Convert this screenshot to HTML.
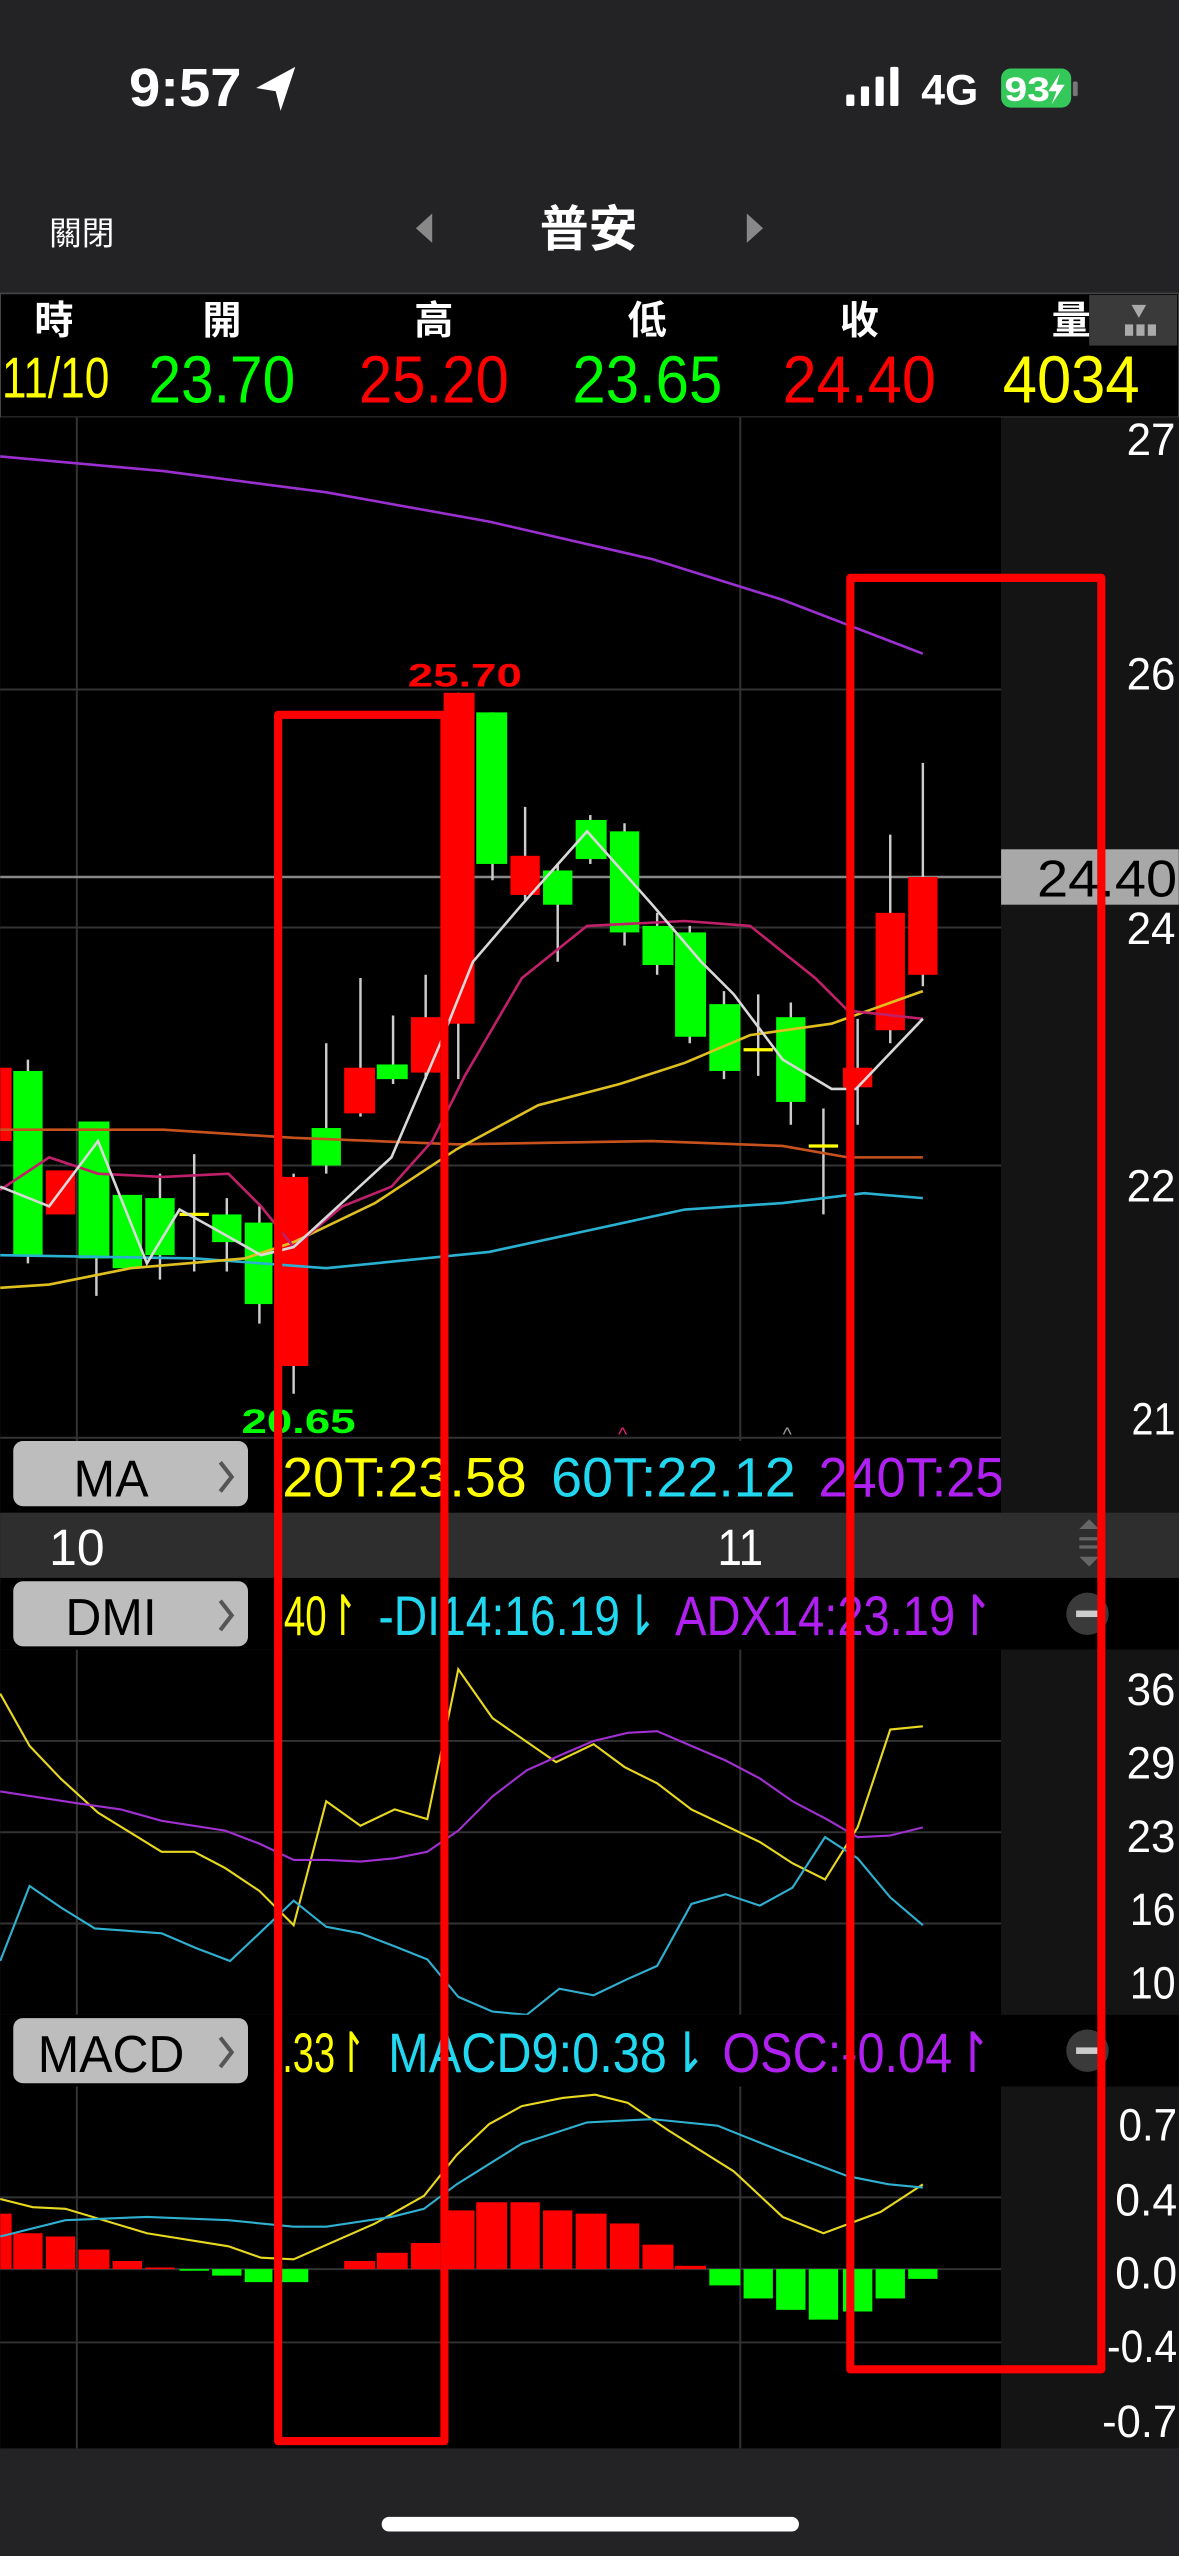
<!DOCTYPE html>
<html><head><meta charset="utf-8"><style>
html,body{margin:0;padding:0;background:#232326;}
svg{display:block;}
text{font-family:"Liberation Sans","Noto Sans CJK TC",sans-serif;}
</style></head><body>
<svg width="1179" height="2556" viewBox="0 0 723 1568" xmlns="http://www.w3.org/2000/svg">
<rect x="0" y="0" width="723" height="1568" fill="#232326"/>
<!-- status bar -->
<text x="79" y="65" font-size="33" font-weight="bold" fill="#fff" textLength="69" lengthAdjust="spacingAndGlyphs">9:57</text>
<path d="M157 54 L181 41 L172 68 L169 56 Z" fill="#fff"/>
<rect x="519" y="58" width="5" height="7" rx="1" fill="#fff"/>
<rect x="528" y="53" width="5" height="12" rx="1" fill="#fff"/>
<rect x="537" y="47" width="5" height="18" rx="1" fill="#fff"/>
<rect x="546" y="41" width="5" height="24" rx="1" fill="#fff"/>
<text x="565" y="64" font-size="26" font-weight="bold" fill="#fff" textLength="35" lengthAdjust="spacingAndGlyphs">4G</text>
<rect x="614" y="42" width="43" height="24" rx="6" fill="#34c759"/>
<text x="616" y="62" font-size="21" font-weight="bold" fill="#fff" textLength="28" lengthAdjust="spacingAndGlyphs">93</text>
<path d="M650 45 L643 56 L648 56 L645 64 L653 52 L648 52 Z" fill="#fff"/>
<rect x="658" y="50" width="3" height="9" rx="1" fill="#777"/>
<!-- nav -->
<text x="30" y="150" font-size="20" fill="#fff">關閉</text>
<path d="M265 131 L255 140 L265 149 Z" fill="#888"/>
<text x="361" y="151" font-size="30" font-weight="bold" fill="#fff" text-anchor="middle">普安</text>
<path d="M458 131 L468 140 L458 149 Z" fill="#888"/>
<!-- quote header -->
<rect x="0" y="180" width="723" height="76" fill="#000" stroke="#444" stroke-width="1"/>
<g font-size="24" font-weight="bold" fill="#fff" text-anchor="middle">
<text x="33" y="205">時</text><text x="136" y="205">開</text><text x="266" y="205">高</text>
<text x="397" y="205">低</text><text x="527" y="205">收</text><text x="657" y="205">量</text>
</g>
<rect x="668" y="181" width="54" height="31" fill="#3a3a3a"/>
<path d="M694 187 L703 187 L698.5 195 Z" fill="#aaa"/>
<rect x="690" y="199" width="5" height="7" fill="#aaa"/><rect x="697" y="199" width="5" height="7" fill="#aaa"/><rect x="704" y="199" width="5" height="7" fill="#aaa"/>
<g font-size="41" text-anchor="middle">
<text x="34" y="244" fill="#ffff00" font-size="35" textLength="66" lengthAdjust="spacingAndGlyphs">11/10</text>
<text x="136" y="247" fill="#00ff00" textLength="90" lengthAdjust="spacingAndGlyphs">23.70</text>
<text x="266" y="247" fill="#ff0000" textLength="92" lengthAdjust="spacingAndGlyphs">25.20</text>
<text x="397" y="247" fill="#00ff00" textLength="92" lengthAdjust="spacingAndGlyphs">23.65</text>
<text x="527" y="247" fill="#ff0000" textLength="94" lengthAdjust="spacingAndGlyphs">24.40</text>
<text x="657" y="247" fill="#ffff00" textLength="84" lengthAdjust="spacingAndGlyphs">4034</text>
</g>
<!-- price chart -->
<rect x="0" y="256" width="614" height="628" fill="#000"/>
<rect x="614" y="256" width="109" height="628" fill="#141414"/>
<g stroke="#333" stroke-width="1.2">
<line x1="47" y1="256" x2="47" y2="884"/><line x1="454" y1="256" x2="454" y2="884"/>
<line x1="0" y1="423" x2="614" y2="423"/><line x1="0" y1="569" x2="614" y2="569"/><line x1="0" y1="715" x2="614" y2="715"/>
<line x1="0" y1="882" x2="614" y2="882"/>
</g>
<g font-size="28" fill="#fff">
<text x="691" y="279" textLength="30" lengthAdjust="spacingAndGlyphs">27</text><text x="691" y="423" textLength="30" lengthAdjust="spacingAndGlyphs">26</text><text x="691" y="579" textLength="30" lengthAdjust="spacingAndGlyphs">24</text><text x="691" y="737" textLength="30" lengthAdjust="spacingAndGlyphs">22</text><text x="694" y="880" textLength="27" lengthAdjust="spacingAndGlyphs">21</text>
</g>
<line x1="0" y1="538" x2="614" y2="538" stroke="#888" stroke-width="1.5"/>
<rect x="614" y="521" width="109" height="34" fill="#a8a8a8"/>
<text x="636" y="550" font-size="32" fill="#000" textLength="86" lengthAdjust="spacingAndGlyphs">24.40</text>
<!-- wicks -->
<g stroke="#ccc" stroke-width="1.5">
<line x1="17" y1="650" x2="17" y2="775"/><line x1="59" y1="690" x2="59" y2="795"/><line x1="98" y1="720" x2="98" y2="785"/>
<line x1="119" y1="708" x2="119" y2="780"/><line x1="139" y1="735" x2="139" y2="780"/><line x1="159" y1="740" x2="159" y2="812"/>
<line x1="180" y1="720" x2="180" y2="855"/><line x1="200" y1="640" x2="200" y2="720"/><line x1="221" y1="600" x2="221" y2="685"/>
<line x1="241" y1="623" x2="241" y2="665"/><line x1="261" y1="598" x2="261" y2="662"/><line x1="281" y1="425" x2="281" y2="662"/>
<line x1="302" y1="437" x2="302" y2="540"/><line x1="322" y1="495" x2="322" y2="552"/><line x1="342" y1="530" x2="342" y2="590"/>
<line x1="362" y1="500" x2="362" y2="530"/><line x1="383" y1="505" x2="383" y2="580"/><line x1="403" y1="560" x2="403" y2="598"/>
<line x1="423" y1="568" x2="423" y2="640"/><line x1="444" y1="608" x2="444" y2="662"/><line x1="465" y1="610" x2="465" y2="660"/>
<line x1="485" y1="615" x2="485" y2="690"/><line x1="505" y1="680" x2="505" y2="745"/><line x1="526" y1="625" x2="526" y2="690"/>
<line x1="546" y1="512" x2="546" y2="640"/><line x1="566" y1="468" x2="566" y2="605"/>
</g>
<!-- bodies -->
<g fill="#00ff00">
<rect x="8" y="657" width="18" height="113"/><rect x="48" y="688" width="19" height="84"/><rect x="69" y="733" width="18" height="45"/>
<rect x="89" y="735" width="18" height="35"/><rect x="130" y="745" width="18" height="17"/><rect x="150" y="750" width="17" height="50"/>
<rect x="191" y="692" width="18" height="23"/><rect x="231" y="653" width="19" height="9"/><rect x="292" y="437" width="19" height="93"/>
<rect x="333" y="534" width="18" height="21"/><rect x="353" y="503" width="19" height="24"/><rect x="374" y="510" width="18" height="62"/>
<rect x="394" y="568" width="19" height="24"/><rect x="414" y="572" width="19" height="64"/><rect x="435" y="616" width="19" height="41"/>
<rect x="476" y="624" width="18" height="52"/>
</g>
<g fill="#ff0000">
<rect x="0" y="655" width="7" height="45"/><rect x="28" y="718" width="18" height="27"/><rect x="170" y="722" width="19" height="116"/>
<rect x="211" y="655" width="19" height="28"/><rect x="252" y="624" width="18" height="34"/><rect x="272" y="425" width="19" height="203"/>
<rect x="313" y="525" width="18" height="24"/><rect x="517" y="655" width="18" height="12"/><rect x="537" y="560" width="18" height="72"/>
<rect x="557" y="538" width="18" height="60"/>
</g>
<g stroke="#ffff00" stroke-width="2"><line x1="110" y1="745" x2="128" y2="745"/><line x1="456" y1="644" x2="474" y2="644"/><line x1="496" y1="703" x2="514" y2="703"/></g>
<!-- MA lines -->
<g fill="none" stroke-width="1.6">
<polyline points="0,280 100,289 200,302 300,320 400,343 480,368 566,401" stroke="#9b30d0"/>
<path d="M0 693 L100 693 L180 698 L280 702 L400 700 L480 703 L520 710 L566 710" stroke="#c8521e"/>
<path d="M0 770 L120 772 L200 778 L260 772 L300 768 L360 755 L420 742 L480 738 L530 732 L566 735" stroke="#2ab0d0"/>
<path d="M0 790 L30 788 L80 778 L150 772 L180 762 L230 738 L280 705 L330 678 L380 665 L420 652 L460 635 L510 628 L566 608" stroke="#e0c020"/>
<path d="M0 730 L30 710 L60 720 L100 722 L140 720 L160 740 L180 765 L210 740 L240 728 L265 700 L285 660 L320 600 L360 568 L420 565 L460 568 L500 600 L520 620 L566 625" stroke="#c0206a"/>
<path d="M0 728 L30 740 L60 700 L90 775 L110 742 L130 753 L160 770 L180 765 L240 710 L270 640 L290 590 L320 555 L360 510 L400 555 L430 590 L450 610 L480 650 L510 668 L525 668 L566 625" stroke="#d8d8d8"/>
</g>
<text x="250" y="421" font-size="20" font-weight="bold" fill="#ff0000" textLength="70" lengthAdjust="spacingAndGlyphs">25.70</text>
<text x="148" y="879" font-size="21" font-weight="bold" fill="#00ff00" textLength="70" lengthAdjust="spacingAndGlyphs">20.65</text>
<text x="379" y="884" font-size="12" fill="#e0207a">^</text>
<text x="480" y="884" font-size="12" fill="#999">^</text>
<!-- MA bar -->
<rect x="0" y="884" width="614" height="44" fill="#000"/>
<rect x="614" y="884" width="109" height="44" fill="#141414"/>
<rect x="8" y="884" width="144" height="40" rx="6" fill="#bdbdbd"/>
<text x="68" y="918" font-size="32" fill="#000" text-anchor="middle" textLength="46" lengthAdjust="spacingAndGlyphs">MA</text>
<path d="M135 897 L142 906 L135 915" fill="none" stroke="#555" stroke-width="2.5"/>
<g font-size="34">
<text x="173" y="918" fill="#ffff00" textLength="150" lengthAdjust="spacingAndGlyphs">20T:23.58</text>
<text x="338" y="918" fill="#22d8f0" textLength="150" lengthAdjust="spacingAndGlyphs">60T:22.12</text>
<text x="502" y="918" fill="#b020f0" textLength="114" lengthAdjust="spacingAndGlyphs">240T:25</text>
</g>
<rect x="614" y="884" width="109" height="44" fill="#141414"/>
<!-- date bar -->
<rect x="0" y="928" width="723" height="40" fill="#2e2e2e"/>
<text x="30" y="960" font-size="31" fill="#fff" textLength="34" lengthAdjust="spacingAndGlyphs">10</text>
<text x="440" y="960" font-size="31" fill="#fff" textLength="28" lengthAdjust="spacingAndGlyphs">11</text>
<path d="M662 938 L668 932 L674 938 Z M662 955 L668 961 L674 955 Z" fill="#666"/>
<rect x="662" y="943" width="12" height="2" fill="#666"/><rect x="662" y="948" width="12" height="2" fill="#666"/>
<!-- DMI bar -->
<rect x="0" y="968" width="723" height="44" fill="#000"/>
<rect x="8" y="970" width="144" height="40" rx="6" fill="#bdbdbd"/>
<text x="68" y="1003" font-size="32" fill="#000" text-anchor="middle" textLength="56" lengthAdjust="spacingAndGlyphs">DMI</text>
<path d="M135 982 L142 991 L135 1000" fill="none" stroke="#555" stroke-width="2.5"/>
<g font-size="34">
<text x="174" y="1003" fill="#ffff00" textLength="46" lengthAdjust="spacingAndGlyphs">40↾</text>
<text x="232" y="1003" fill="#22d8f0" textLength="172" lengthAdjust="spacingAndGlyphs">-DI14:16.19⇂</text>
<text x="414" y="1003" fill="#b020f0" textLength="196" lengthAdjust="spacingAndGlyphs">ADX14:23.19↾</text>
</g>
<circle cx="667" cy="990" r="13" fill="#3a3a3a"/><rect x="660" y="988" width="14" height="4" fill="#ccc"/>
<!-- DMI chart -->
<rect x="0" y="1012" width="614" height="224" fill="#000"/>
<rect x="614" y="1012" width="109" height="224" fill="#141414"/>
<g stroke="#333" stroke-width="1.2">
<line x1="47" y1="1012" x2="47" y2="1236"/><line x1="454" y1="1012" x2="454" y2="1236"/>
<line x1="0" y1="1068" x2="614" y2="1068"/><line x1="0" y1="1124" x2="614" y2="1124"/><line x1="0" y1="1180" x2="614" y2="1180"/>
</g>
<g font-size="28" fill="#fff">
<text x="691" y="1046" textLength="30" lengthAdjust="spacingAndGlyphs">36</text><text x="691" y="1091" textLength="30" lengthAdjust="spacingAndGlyphs">29</text><text x="691" y="1136" textLength="30" lengthAdjust="spacingAndGlyphs">23</text><text x="693" y="1181" textLength="28" lengthAdjust="spacingAndGlyphs">16</text><text x="693" y="1226" textLength="28" lengthAdjust="spacingAndGlyphs">10</text>
</g>
<g fill="none" stroke-width="1.3">
<polyline stroke="#e8d820" points="0,1039 18,1071 37,1091 60,1112 99,1136 119,1136 138,1146 159,1160 180,1181 200,1105 221,1120 242,1110 262,1116 281,1024 302,1054 341,1081 364,1070 383,1084 403,1094 424,1110 445,1120 466,1130 486,1143 506,1153 526,1121 546,1061 566,1059"/>
<polyline stroke="#a030d0" points="0,1099 46,1106 74,1110 99,1117 138,1123 159,1131 180,1141 200,1141 221,1142 242,1140 262,1136 281,1123 302,1102 323,1086 343,1077 364,1068 385,1063 403,1062 424,1071 445,1080 466,1091 486,1105 507,1116 526,1127 546,1126 566,1121"/>
<polyline stroke="#30b0d0" points="0,1203 18,1157 37,1170 58,1183 99,1186 120,1195 141,1203 159,1186 180,1166 200,1182 221,1186 242,1194 262,1202 281,1225 302,1234 323,1236 343,1220 364,1224 385,1214 403,1206 424,1168 445,1162 466,1169 486,1158 506,1127 526,1140 546,1164 566,1181"/>
</g>
<!-- MACD bar -->
<rect x="0" y="1236" width="723" height="44" fill="#000"/>
<rect x="8" y="1238" width="144" height="40" rx="6" fill="#bdbdbd"/>
<text x="68" y="1271" font-size="32" fill="#000" text-anchor="middle" textLength="90" lengthAdjust="spacingAndGlyphs">MACD</text>
<path d="M135 1250 L142 1259 L135 1268" fill="none" stroke="#555" stroke-width="2.5"/>
<g font-size="34">
<text x="173" y="1271" fill="#ffff00" textLength="52" lengthAdjust="spacingAndGlyphs">.33↾</text>
<text x="238" y="1271" fill="#22d8f0" textLength="196" lengthAdjust="spacingAndGlyphs">MACD9:0.38⇂</text>
<text x="443" y="1271" fill="#b020f0" textLength="166" lengthAdjust="spacingAndGlyphs">OSC:-0.04↾</text>
</g>
<circle cx="667" cy="1258" r="13" fill="#3a3a3a"/><rect x="660" y="1256" width="14" height="4" fill="#ccc"/>
<!-- MACD chart -->
<rect x="0" y="1280" width="614" height="222" fill="#000"/>
<rect x="614" y="1280" width="109" height="222" fill="#141414"/>
<g stroke="#333" stroke-width="1.2">
<line x1="47" y1="1280" x2="47" y2="1502"/><line x1="454" y1="1280" x2="454" y2="1502"/>
<line x1="0" y1="1348" x2="614" y2="1348"/><line x1="0" y1="1392" x2="614" y2="1392"/><line x1="0" y1="1437" x2="614" y2="1437"/>
</g>
<g font-size="28" fill="#fff">
<text x="686" y="1313" textLength="36" lengthAdjust="spacingAndGlyphs">0.7</text><text x="684" y="1359" textLength="38" lengthAdjust="spacingAndGlyphs">0.4</text><text x="684" y="1404" textLength="38" lengthAdjust="spacingAndGlyphs">0.0</text><text x="679" y="1449" textLength="43" lengthAdjust="spacingAndGlyphs">-0.4</text><text x="676" y="1495" textLength="46" lengthAdjust="spacingAndGlyphs">-0.7</text>
</g>
<g fill="#ff0000">
<rect x="0" y="1358" width="7" height="34"/><rect x="8" y="1370" width="18" height="22"/><rect x="28" y="1372" width="18" height="20"/>
<rect x="48" y="1380" width="19" height="12"/><rect x="69" y="1387" width="18" height="5"/><rect x="89" y="1391" width="18" height="1"/>
<rect x="211" y="1387" width="19" height="5"/><rect x="231" y="1382" width="19" height="10"/><rect x="252" y="1376" width="18" height="16"/>
<rect x="272" y="1356" width="19" height="36"/><rect x="292" y="1351" width="19" height="41"/><rect x="313" y="1351" width="18" height="41"/>
<rect x="333" y="1356" width="18" height="36"/><rect x="353" y="1358" width="19" height="34"/><rect x="374" y="1364" width="18" height="28"/>
<rect x="394" y="1377" width="19" height="15"/><rect x="414" y="1390" width="19" height="2"/>
</g>
<g fill="#00ff00">
<rect x="110" y="1392" width="18" height="1"/><rect x="130" y="1392" width="18" height="4"/><rect x="150" y="1392" width="17" height="8"/>
<rect x="170" y="1392" width="19" height="8"/><rect x="435" y="1392" width="19" height="10"/><rect x="456" y="1392" width="18" height="18"/>
<rect x="476" y="1392" width="18" height="25"/><rect x="496" y="1392" width="18" height="31"/><rect x="517" y="1392" width="18" height="26"/>
<rect x="537" y="1392" width="18" height="18"/><rect x="557" y="1392" width="18" height="6"/>
</g>
<g fill="none" stroke-width="1.3">
<path d="M0 1349 L20 1354 L40 1355 L90 1370 L140 1378 L160 1385 L180 1386 L230 1364 L260 1347 L280 1322 L300 1303 L320 1292 L345 1287 L365 1285 L385 1290 L410 1307 L450 1332 L480 1360 L505 1370 L540 1357 L566 1340" stroke="#e8d820"/>
<path d="M0 1372 L40 1362 L90 1360 L140 1362 L180 1366 L200 1366 L240 1360 L260 1355 L280 1340 L320 1315 L360 1302 L400 1300 L440 1304 L480 1320 L520 1335 L545 1340 L566 1342" stroke="#30b0d0"/>
</g>
<!-- red annotation boxes -->
<g fill="none" stroke="#ff0000" stroke-width="5" stroke-linejoin="round">
<rect x="170.5" y="438.5" width="102" height="1059"/>
<rect x="521.5" y="354.5" width="154" height="1099"/>
</g>
<!-- home bar -->
<rect x="234" y="1544" width="256" height="9" rx="4.5" fill="#fff"/>
</svg>
</body></html>
